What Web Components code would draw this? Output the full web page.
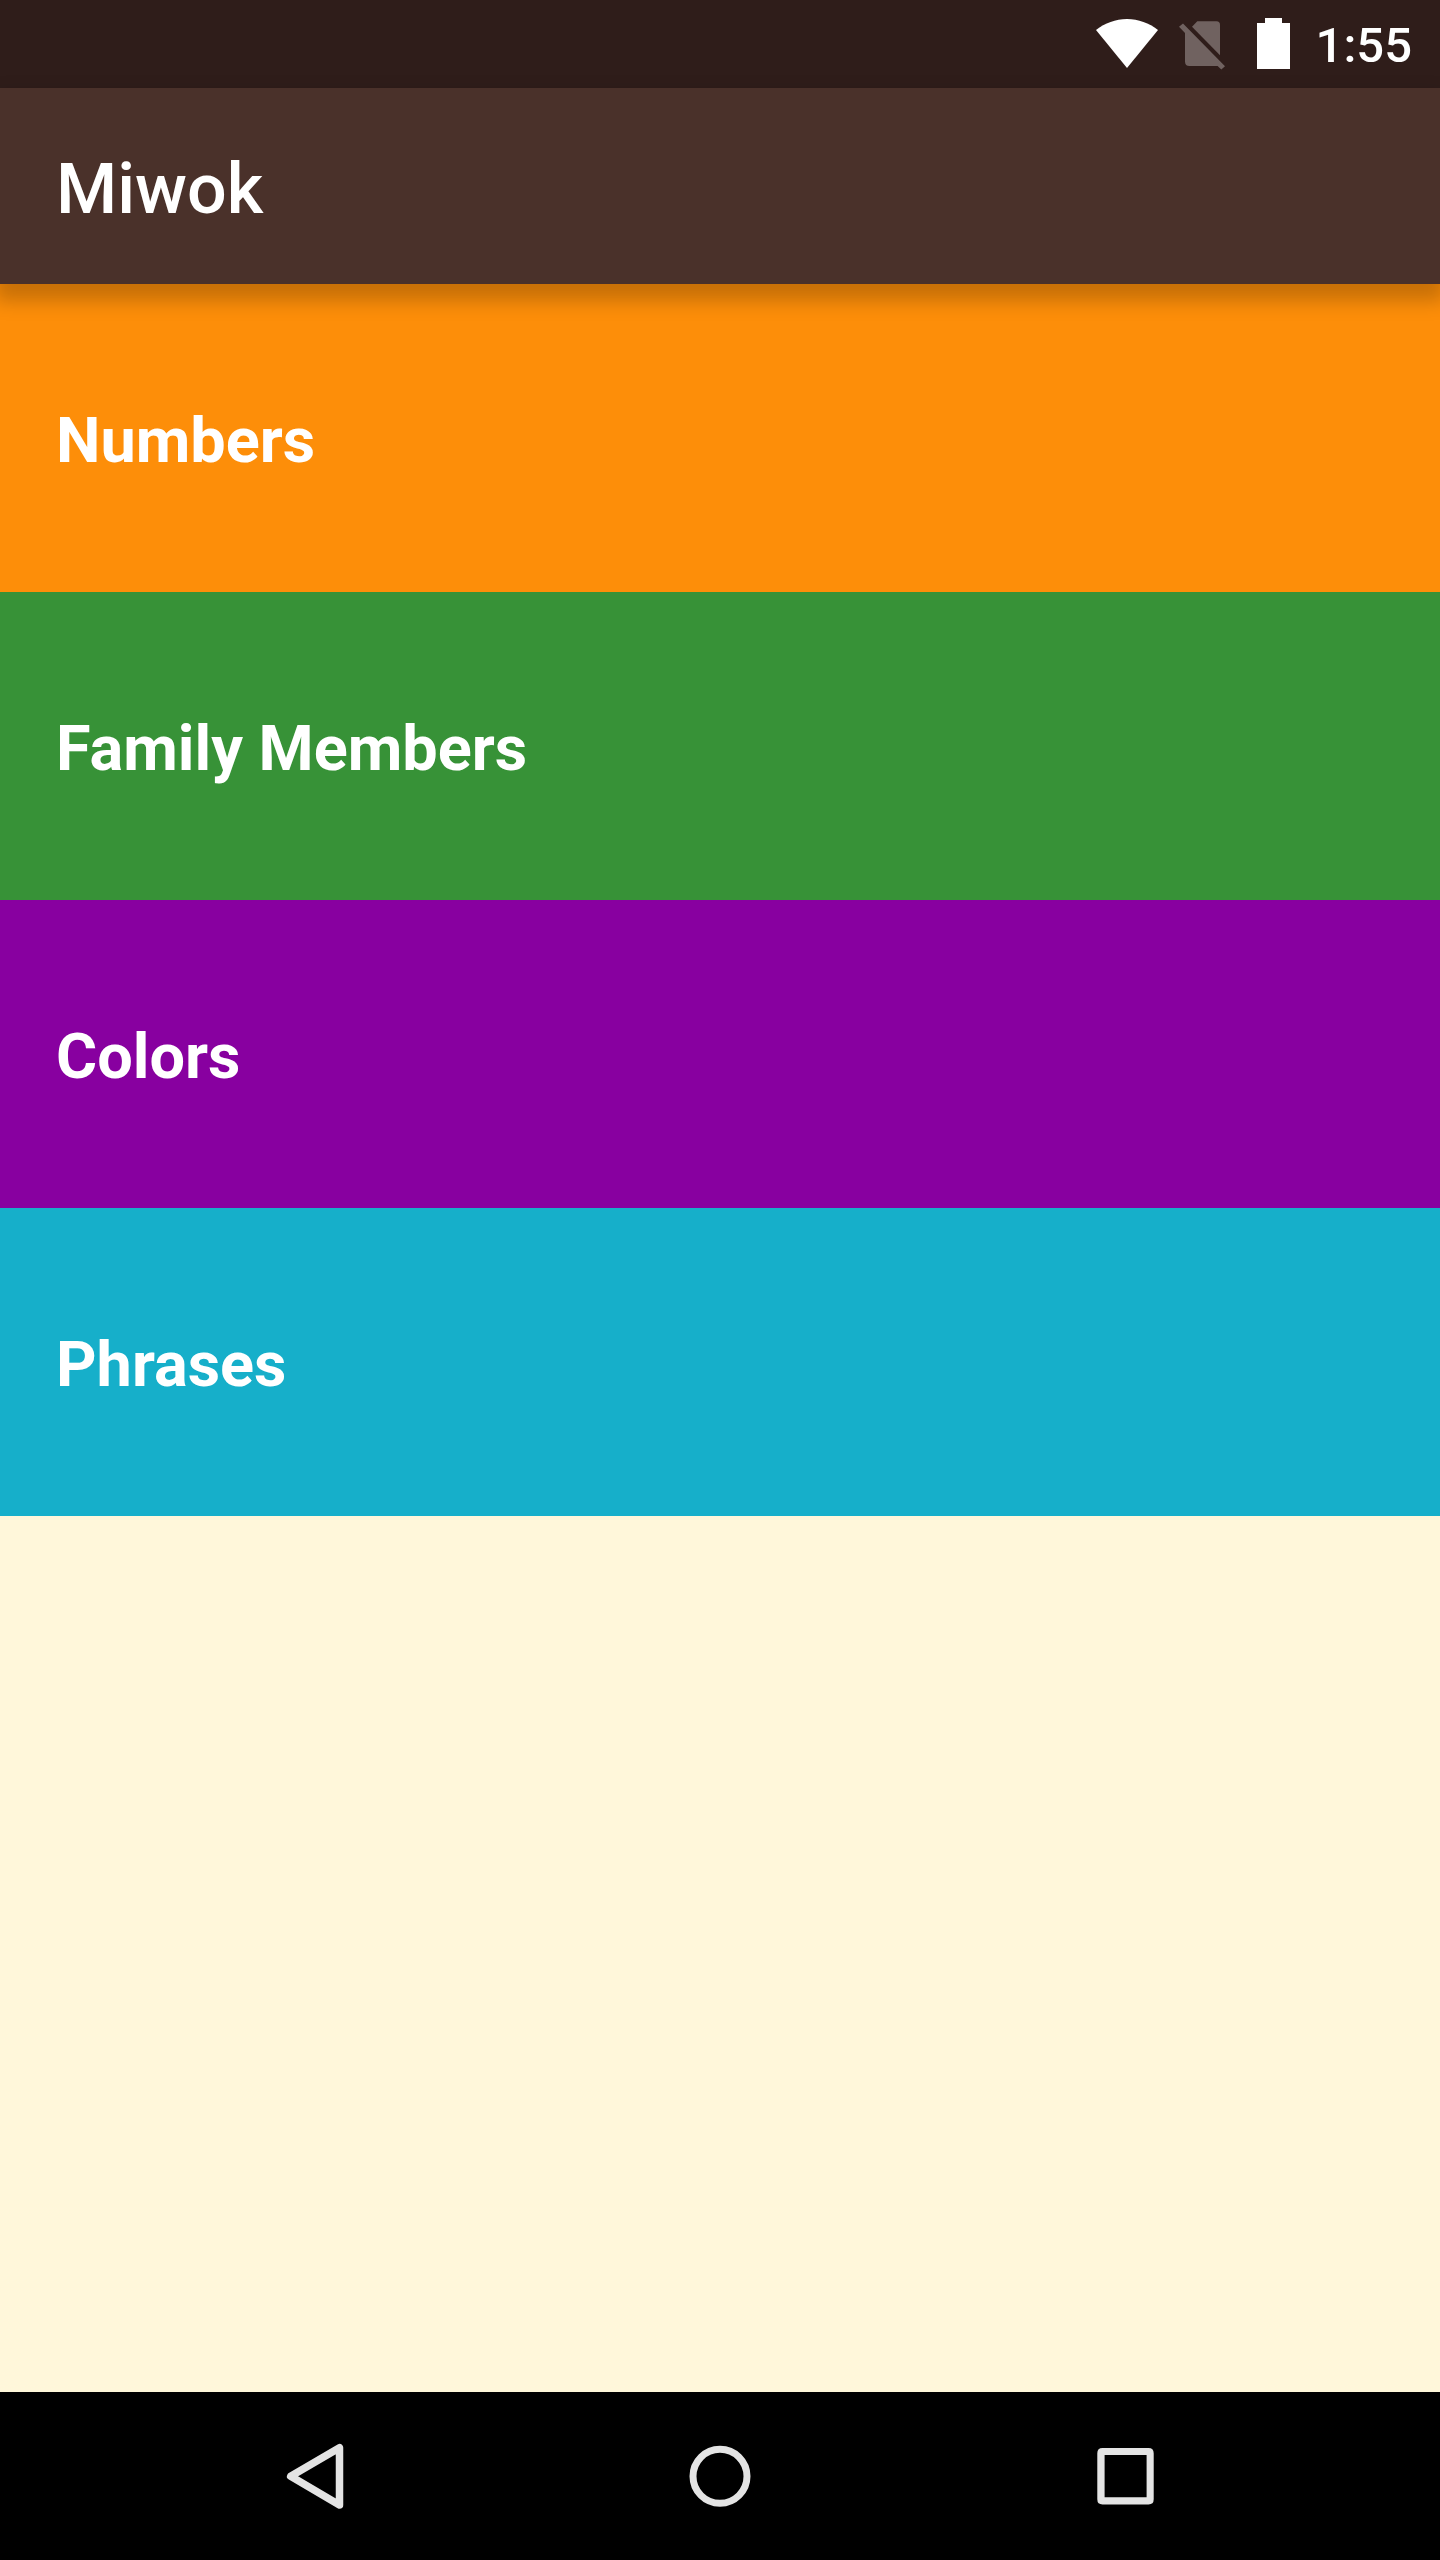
<!DOCTYPE html>
<html lang="en">
<head>
<meta charset="utf-8">
<meta name="viewport" content="width=device-width, initial-scale=1">
<title>Miwok</title>
<style>
  html, body { margin: 0; height: 100%; }
  body { font-family: Roboto, "Liberation Sans", sans-serif; color: #fff; }
</style>
</head>
<body>
<miwok-app>
  <status-bar slot="status" time="1:55"></status-bar>
  <app-bar slot="bar">Miwok</app-bar>
  <category-row href="#numbers" style="--row-color:#fd8e09">Numbers</category-row>
  <category-row href="#family" style="--row-color:#379237">Family Members</category-row>
  <category-row href="#colors" style="--row-color:#8800a0">Colors</category-row>
  <category-row href="#phrases" style="--row-color:#16afca">Phrases</category-row>
  <nav-bar slot="nav"></nav-bar>
</miwok-app>
<script>
  class ShadowElement extends HTMLElement {
    constructor() {
      super();
      this.attachShadow({ mode: "open" }).innerHTML = this.constructor.markup;
    }
  }

  customElements.define("miwok-app", class extends ShadowElement {
    static markup = `
      <style>
        :host { display: flex; flex-direction: column; min-height: 100%; background: #fff7da; }
        main { flex: 1; display: flex; flex-direction: column; }
      </style>
      <slot name="status"></slot>
      <slot name="bar"></slot>
      <main><slot></slot></main>
      <slot name="nav"></slot>`;
  });

  customElements.define("status-bar", class extends ShadowElement {
    static markup = `
      <style>
        :host { display: flex; align-items: center; justify-content: flex-end; gap: 14px;
                height: 88px; padding: 0 28px; background: #2f1d1a; }
        svg { display: block; height: 56px; }
        time { padding-top: 4px; font-size: 49px; line-height: 56px; font-weight: 500; }
      </style>
      <svg width="62" height="56" viewBox="0 0 62 56" fill="#fff" role="img" aria-label="Wi-Fi">
        <path d="M0 14C9 7 19.500 3 31 3S53 7 62 14L31 52Z"/>
      </svg>
      <svg width="60" height="56" viewBox="0 0 60 56" fill="#706260" role="img" aria-label="No SIM card">
        <path d="M20 10.700L25.300 5.200H44.500Q48 5.200 48 8.700V39.300Z"/>
        <path d="M7 10.700L11 7.500L53 50.300L49.300 53.500L45.600 49.900H17.500Q13 49.900 13 45.400V17Z"/>
      </svg>
      <svg width="56" height="56" viewBox="0 0 56 56" fill="#fff" role="img" aria-label="Battery full">
        <path d="M19 2H36V7H44V53H11V7H19Z"/>
      </svg>
      <time></time>`;
    connectedCallback() {
      this.shadowRoot.querySelector("time").textContent = this.getAttribute("time");
    }
  });

  customElements.define("app-bar", class extends ShadowElement {
    static markup = `
      <style>
        :host { display: flex; align-items: center; height: 196px; padding: 0 56px;
                background: #4a312a; position: relative; z-index: 1;
                box-shadow: 0 12px 18px 5px rgba(0, 0, 0, .21); }
        h1 { margin: 0; padding-top: 6px; font-size: 70px; line-height: 82px; font-weight: 500; }
      </style>
      <h1><slot></slot></h1>`;
  });

  customElements.define("category-row", class extends ShadowElement {
    static markup = `
      <style>
        :host { display: block; background: var(--row-color); }
        a { display: flex; align-items: center; height: 308px; padding: 0 56px;
            color: inherit; text-decoration: none; }
        span { padding-top: 6px; font-size: 63px; line-height: 74px; font-weight: 700; }
      </style>
      <a><span><slot></slot></span></a>`;
    connectedCallback() {
      this.shadowRoot.querySelector("a").setAttribute("href", this.getAttribute("href"));
    }
  });

  customElements.define("nav-bar", class extends ShadowElement {
    static markup = `
      <style>
        :host { display: block; background: #000; }
        nav { display: flex; align-items: center; justify-content: space-between;
              height: 168px; padding: 0 273px; }
        button { display: block; width: 84px; height: 84px; margin: 0; padding: 0;
                 border: 0; background: none; }
        svg { display: block; }
      </style>
      <nav>
        <button type="button" aria-label="Back">
          <svg width="84" height="84" viewBox="0 0 84 84" fill="none" stroke="#e4e4e4" stroke-width="7.500" stroke-linejoin="round">
            <path d="M66.500 13.700V71L17.700 42.300Z"/>
          </svg>
        </button>
        <button type="button" aria-label="Home">
          <svg width="84" height="84" viewBox="0 0 84 84" fill="none" stroke="#e4e4e4" stroke-width="7">
            <circle cx="42" cy="42.300" r="27"/>
          </svg>
        </button>
        <button type="button" aria-label="Overview">
          <svg width="84" height="84" viewBox="0 0 84 84" fill="#e4e4e4" fill-rule="evenodd">
            <path d="M19.500 14H65.500Q70.700 14 70.700 19.200V65.200Q70.700 70.400 65.500 70.400H19.500Q14.300 70.400 14.300 65.200V19.200Q14.300 14 19.500 14ZM21.600 21V63.200H63.600V21Z"/>
          </svg>
        </button>
      </nav>`;
  });
</script>
</body>
</html>
